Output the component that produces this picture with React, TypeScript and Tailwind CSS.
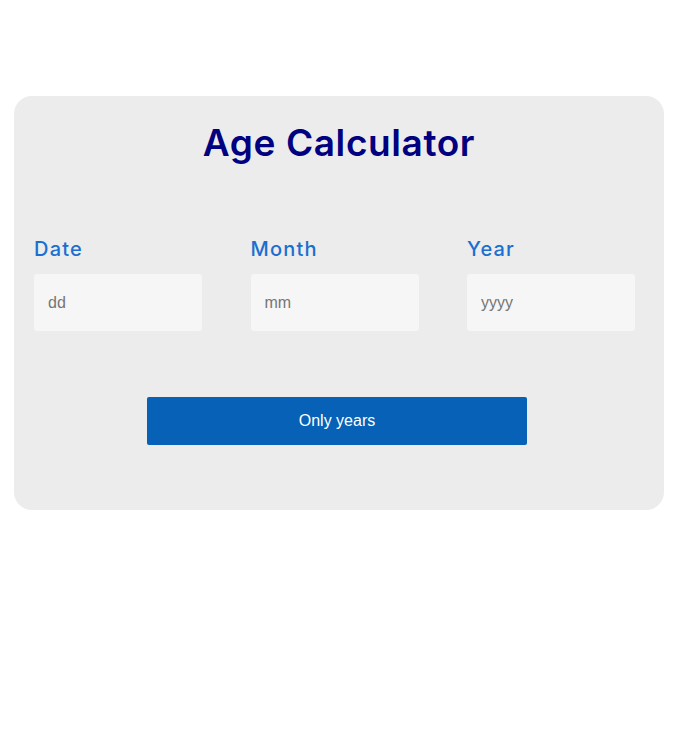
import React from "react";

const fields = [
  { label: "Date", placeholder: "dd" },
  { label: "Month", placeholder: "mm" },
  { label: "Year", placeholder: "yyyy" },
];

export default function App() {
  return (
    <div className="h-[732px] w-[679px] bg-white pt-[96px] pl-[14px]">
      <div className="w-[650px] h-[414px] rounded-[18px] bg-[#ececec] pt-[25px]">
        <h1 className="text-center text-[37px] leading-[44px] font-semibold text-[#000080] font-['Inter',sans-serif] tracking-[0.6px]">
          Age Calculator
        </h1>

        <div className="mt-[70px] flex gap-[48.5px] pl-[20px]">
          {fields.map((f) => (
            <div key={f.label} className="flex w-[168px] flex-col">
              <label className="text-[20px] leading-[28px] font-medium text-[#1b6fd0] font-['Inter',sans-serif] tracking-[1.2px]">
                {f.label}
              </label>
              <input
                type="text"
                placeholder={f.placeholder}
                className="mt-[11px] h-[57px] w-[168px] rounded-[3px] bg-[#f6f6f6] px-[14px] text-[16px] font-['Liberation_Sans',Arial,sans-serif] placeholder:text-[#757575] outline-none"
              />
            </div>
          ))}
        </div>

        <div className="mt-[66px] flex justify-center pr-[4px]">
          <button
            type="button"
            className="h-[48px] w-[380px] rounded-[2px] bg-[#0661b7] text-[16px] text-white font-['Liberation_Sans',Arial,sans-serif]"
          >
            Only years
          </button>
        </div>
      </div>
    </div>
  );
}
